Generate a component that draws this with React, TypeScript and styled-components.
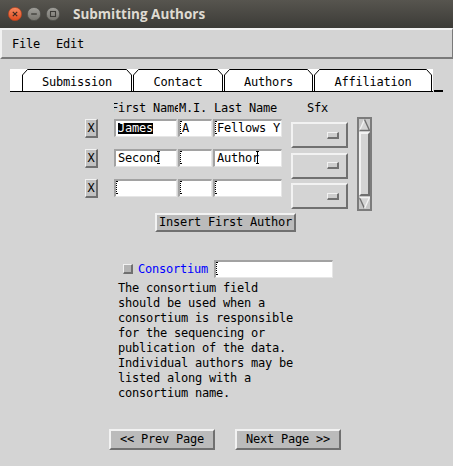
import React from "react";
import styled, { createGlobalStyle } from "styled-components";

const GlobalStyle = createGlobalStyle`
  html, body { margin: 0; padding: 0; background: #d4d4d4; }
  body {
    font-family: "DejaVu Sans Mono", "Liberation Mono", monospace;
    font-size: 12px;
    letter-spacing: -0.22px;
    color: #000;
  }
  * { box-sizing: border-box; }
`;

const LIGHT = "#f2f2f2";
const DARK = "#707070";
const FACE = "#bbbbbb";
const BG = "#d4d4d4";

const Window = styled.div`
  width: 453px;
  height: 466px;
  display: flex;
  flex-direction: column;
  background: ${BG};
  overflow: hidden;
`;

const TitleBar = styled.div`
  height: 28px;
  flex: none;
  display: flex;
  align-items: center;
  padding-left: 8px;
  background: linear-gradient(#57554f, #3c3b37);
`;

const WinButtons = styled.div`
  display: flex;
  gap: 5px;
  margin-right: 13px;
`;

const Title = styled.div`
  font-family: "Open Sans", "DejaVu Sans", sans-serif;
  font-weight: 700;
  font-size: 13.5px;
  letter-spacing: 0;
  color: #dfdbd2;
`;

const MenuBar = styled.div`
  height: 31px;
  flex: none;
  display: flex;
  align-items: center;
  gap: 16px;
  padding-left: 10px;
  border-top: 2px solid ${LIGHT};
  border-left: 2px solid ${LIGHT};
  border-bottom: 2px solid #7a7a7a;
  border-right: 1px solid #7a7a7a;
`;

const MenuItem = styled.span`
  line-height: 14px;
`;

const TabRow = styled.div`
  display: flex;
  align-items: flex-end;
  margin-top: 10px;
  padding-left: 10px;
`;

const TabStrip = styled.div`
  width: 423px;
  height: 23px;
  background: #fff;
  border-bottom: 1px solid #000;
  display: flex;
  gap: 1px;
  padding-left: 12px;
`;

const Tab = styled.div<{ $w: number }>`
  position: relative;
  width: ${(p) => p.$w}px;
  height: 22px;
  display: flex;
  align-items: center;
  justify-content: center;
  padding-top: 3px;
  line-height: 14px;
`;

const TabOutline = styled.svg`
  position: absolute;
  left: 0;
  top: 0;
`;

const TabDash = styled.div`
  width: 9px;
  height: 2px;
  background: #000;
  margin-left: 1px;
`;

const AuthorArea = styled.div`
  display: flex;
  margin-top: 10px;
  padding-left: 85px;
`;

const AuthorsBlock = styled.div`
  display: flex;
  flex-direction: column;
  gap: 12px;
`;

const AuthorGrid = styled.div<{ $header?: boolean }>`
  display: grid;
  grid-template-columns: 29px 64px 35px 70px;
  height: ${(p) => (p.$header ? "12px" : "18px")};
  margin-bottom: ${(p) => (p.$header ? "-7px" : "0")};
  line-height: 12px;
`;

const FirstLabel = styled.div`
  display: flex;
  justify-content: center;
  overflow: hidden;
  white-space: nowrap;
`;

const ColLabel = styled.div`
  padding-left: 1px;
  white-space: nowrap;
  overflow: hidden;
`;

const XButton = styled.div`
  width: 13px;
  height: 19px;
  margin-top: -0.5px;
  display: flex;
  align-items: center;
  justify-content: center;
  background: #c2c2c2;
  border-top: 1px solid ${LIGHT};
  border-left: 1px solid ${LIGHT};
  border-bottom: 2px solid ${DARK};
  border-right: 2px solid ${DARK};
  line-height: 12px;
`;

const Field = styled.div<{ $w?: number }>`
  position: relative;
  width: ${(p) => (p.$w ? `${p.$w}px` : "calc(100% - 1px)")};
  height: 18px;
  background: #fff;
  border-top: 2px solid #a2a2a2;
  border-left: 2px solid #a2a2a2;
  border-bottom: 1px solid #e6e6e6;
  border-right: 1px solid #e6e6e6;
  padding-left: 2px;
  display: flex;
  align-items: center;
  overflow: hidden;
  white-space: nowrap;
  line-height: 13px;
`;

const Selected = styled.span`
  display: inline-block;
  background: #000;
  color: #fff;
  height: 11px;
  line-height: 11px;
`;

const CaretBox = styled.svg`
  position: absolute;
  top: 0;
`;

const Caret = ({ at, solid }: { at: number; solid?: boolean }) => (
  <CaretBox width={3} height={13} viewBox="0 0 3 13" style={{ left: at * 7 - 1 }}>
    <line x1={0} y1={0.5} x2={3} y2={0.5} stroke="#000" strokeDasharray={solid ? undefined : "1 1"} />
    <line x1={1.5} y1={0} x2={1.5} y2={13} stroke="#000" strokeDasharray={solid ? undefined : "1 1"} />
    <line x1={0} y1={12.5} x2={3} y2={12.5} stroke="#000" strokeDasharray={solid ? undefined : "1 1"} />
  </CaretBox>
);

const SfxColumn = styled.div`
  display: flex;
  flex-direction: column;
  margin-left: 8px;
`;

const SfxHeader = styled.div`
  height: 12px;
  line-height: 12px;
  padding-left: 16px;
  margin-bottom: 8px;
`;

const SfxList = styled.div`
  display: flex;
  flex-direction: column;
  gap: 4.5px;
`;

const SfxBox = styled.div`
  width: 57px;
  height: 26px;
  border-top: 2px solid ${LIGHT};
  border-left: 2px solid ${LIGHT};
  border-bottom: 2px solid ${DARK};
  border-right: 2px solid ${DARK};
  display: flex;
  align-items: center;
  justify-content: flex-end;
  padding-right: 7px;
`;

const Indicator = styled.div`
  width: 12px;
  height: 7px;
  background: #cdcdcd;
  border-top: 1px solid ${LIGHT};
  border-left: 1px solid ${LIGHT};
  border-bottom: 2px solid ${DARK};
  border-right: 2px solid ${DARK};
`;

const ScrollTrough = styled.div`
  width: 15px;
  height: 94px;
  margin-left: 9px;
  margin-top: 15px;
  border: 2px solid #7c7c7c;
  background: #c8c8c8;
  display: flex;
  flex-direction: column;
`;

const Slider = styled.div`
  flex: 1;
  margin: 1px 0;
  background: ${BG};
  border-top: 2px solid ${LIGHT};
  border-left: 2px solid ${LIGHT};
  border-bottom: 2px solid ${DARK};
  border-right: 2px solid ${DARK};
`;

const Arrow = ({ down }: { down?: boolean }) => (
  <svg width={11} height={12} viewBox="0 0 11 12" style={{ display: "block", transform: down ? "scaleY(-1)" : undefined }}>
    <polygon points="5.5,0.5 10.5,11.5 0.5,11.5" fill={BG} />
    <polyline points="0.5,11.5 5.5,0.5" fill="none" stroke={down ? DARK : LIGHT} strokeWidth={1.4} />
    <polyline points="5.5,0.5 10.5,11.5 0.5,11.5" fill="none" stroke={down ? LIGHT : DARK} strokeWidth={1.4} />
  </svg>
);

const ButtonRow = styled.div<{ $left: number; $top: number }>`
  display: flex;
  gap: 20px;
  padding-left: ${(p) => p.$left}px;
  margin-top: ${(p) => p.$top}px;
`;

const PushButton = styled.div<{ $w: number; $h: number }>`
  width: ${(p) => p.$w}px;
  height: ${(p) => p.$h}px;
  background: ${FACE};
  border-top: 2px solid ${LIGHT};
  border-left: 2px solid ${LIGHT};
  border-bottom: 2px solid ${DARK};
  border-right: 2px solid ${DARK};
  display: flex;
  align-items: center;
  justify-content: center;
  white-space: pre;
  line-height: 13px;
`;

const ConsortiumRow = styled.div`
  display: flex;
  align-items: center;
  margin-top: 28px;
  padding-left: 123px;
  height: 18px;
`;

const CheckBox = styled.div`
  width: 10px;
  height: 10px;
  background: #b4b4b4;
  border-top: 1px solid ${LIGHT};
  border-left: 1px solid ${LIGHT};
  border-bottom: 2px solid ${DARK};
  border-right: 2px solid ${DARK};
`;

const ConsortiumLabel = styled.span`
  color: #0000ff;
  margin-left: 5px;
  margin-right: 6px;
  line-height: 14px;
`;

const Description = styled.div`
  margin-top: 3px;
  padding-left: 118px;
  line-height: 15px;
  white-space: pre;
`;

const Circle = ({ kind }: { kind: "close" | "min" | "max" }) => (
  <svg width={14} height={14} viewBox="0 0 14 14" style={{ display: "block" }}>
    <defs>
      <linearGradient id={`g-${kind}`} x1="0" y1="0" x2="0" y2="1">
        {kind === "close" ? (
          <>
            <stop offset="0" stopColor="#f68b62" />
            <stop offset="1" stopColor="#df4a1e" />
          </>
        ) : (
          <>
            <stop offset="0" stopColor="#a09f9a" />
            <stop offset="1" stopColor="#76756f" />
          </>
        )}
      </linearGradient>
    </defs>
    <circle cx={7} cy={7} r={6.6} fill={`url(#g-${kind})`} stroke={kind === "close" ? "#b8441f" : "#4e4d49"} strokeWidth={0.7} />
    {kind === "close" && (
      <path d="M4.8 4.8 L9.2 9.2 M9.2 4.8 L4.8 9.2" stroke="#3a2a22" strokeWidth={1.2} />
    )}
    {kind === "min" && <path d="M4.2 7 H9.8" stroke="#3c3b37" strokeWidth={1.3} />}
    {kind === "max" && <rect x={4.5} y={4.5} width={5} height={5} fill="none" stroke="#3c3b37" strokeWidth={1.1} />}
  </svg>
);

const tabs: { label: string; w: number }[] = [
  { label: "Submission", w: 110 },
  { label: "Contact", w: 90 },
  { label: "Authors", w: 89 },
  { label: "Affiliation", w: 118 },
];

type Cell = { text?: string; sel?: boolean; caret?: number; solid?: boolean };
const rows: Cell[][] = [
  [{ text: "James", sel: true }, { text: "A", caret: 0 }, { text: "Fellows Y", caret: 0 }],
  [{ text: "Second", caret: 6 }, { caret: 0 }, { text: "Author", caret: 6, solid: true }],
  [{ caret: 0 }, { caret: 0 }, { caret: 0 }],
];

const description = [
  "The consortium field",
  "should be used when a",
  "consortium is responsible",
  "for the sequencing or",
  "publication of the data.",
  "Individual authors may be",
  "listed along with a",
  "consortium name.",
].join("\n");

export default function App() {
  return (
    <Window>
      <GlobalStyle />
      <TitleBar>
        <WinButtons>
          <Circle kind="close" />
          <Circle kind="min" />
          <Circle kind="max" />
        </WinButtons>
        <Title>Submitting Authors</Title>
      </TitleBar>
      <MenuBar>
        <MenuItem>File</MenuItem>
        <MenuItem>Edit</MenuItem>
      </MenuBar>

      <TabRow>
        <TabStrip>
          {tabs.map((t) => (
            <Tab key={t.label} $w={t.w}>
              <TabOutline width={t.w} height={22} viewBox={`0 0 ${t.w} 22`}>
                <path
                  d={`M0.5 22 V6 L5.5 0.5 H${t.w - 5.5} L${t.w - 0.5} 6 V22`}
                  fill="none"
                  stroke="#000"
                />
              </TabOutline>
              {t.label}
            </Tab>
          ))}
        </TabStrip>
        <TabDash />
      </TabRow>

      <AuthorArea>
        <AuthorsBlock>
          <AuthorGrid $header>
            <div />
            <FirstLabel>First Name</FirstLabel>
            <ColLabel>M.I.</ColLabel>
            <ColLabel>Last Name</ColLabel>
          </AuthorGrid>
          {rows.map((r, i) => (
            <AuthorGrid key={i}>
              <XButton>X</XButton>
              {r.map((c, j) => (
                <Field key={j}>
                  {c.sel ? <Selected>{c.text}</Selected> : c.text}
                  {c.caret !== undefined && <Caret at={c.caret} solid={c.solid} />}
                </Field>
              ))}
            </AuthorGrid>
          ))}
        </AuthorsBlock>
        <SfxColumn>
          <SfxHeader>Sfx</SfxHeader>
          <SfxList>
            {[0, 1, 2].map((i) => (
              <SfxBox key={i}>
                <Indicator />
              </SfxBox>
            ))}
          </SfxList>
        </SfxColumn>
        <ScrollTrough>
          <Arrow />
          <Slider />
          <Arrow down />
        </ScrollTrough>
      </AuthorArea>

      <ButtonRow $left={155} $top={2}>
        <PushButton $w={141} $h={19}>Insert First Author</PushButton>
      </ButtonRow>

      <ConsortiumRow>
        <CheckBox />
        <ConsortiumLabel>Consortium</ConsortiumLabel>
        <Field $w={119}>
          <Caret at={0} />
        </Field>
      </ConsortiumRow>

      <Description>{description}</Description>

      <ButtonRow $left={109} $top={28}>
        <PushButton $w={106} $h={21}>{"<< Prev Page"}</PushButton>
        <PushButton $w={106} $h={21}>{"Next Page >>"}</PushButton>
      </ButtonRow>
    </Window>
  );
}
